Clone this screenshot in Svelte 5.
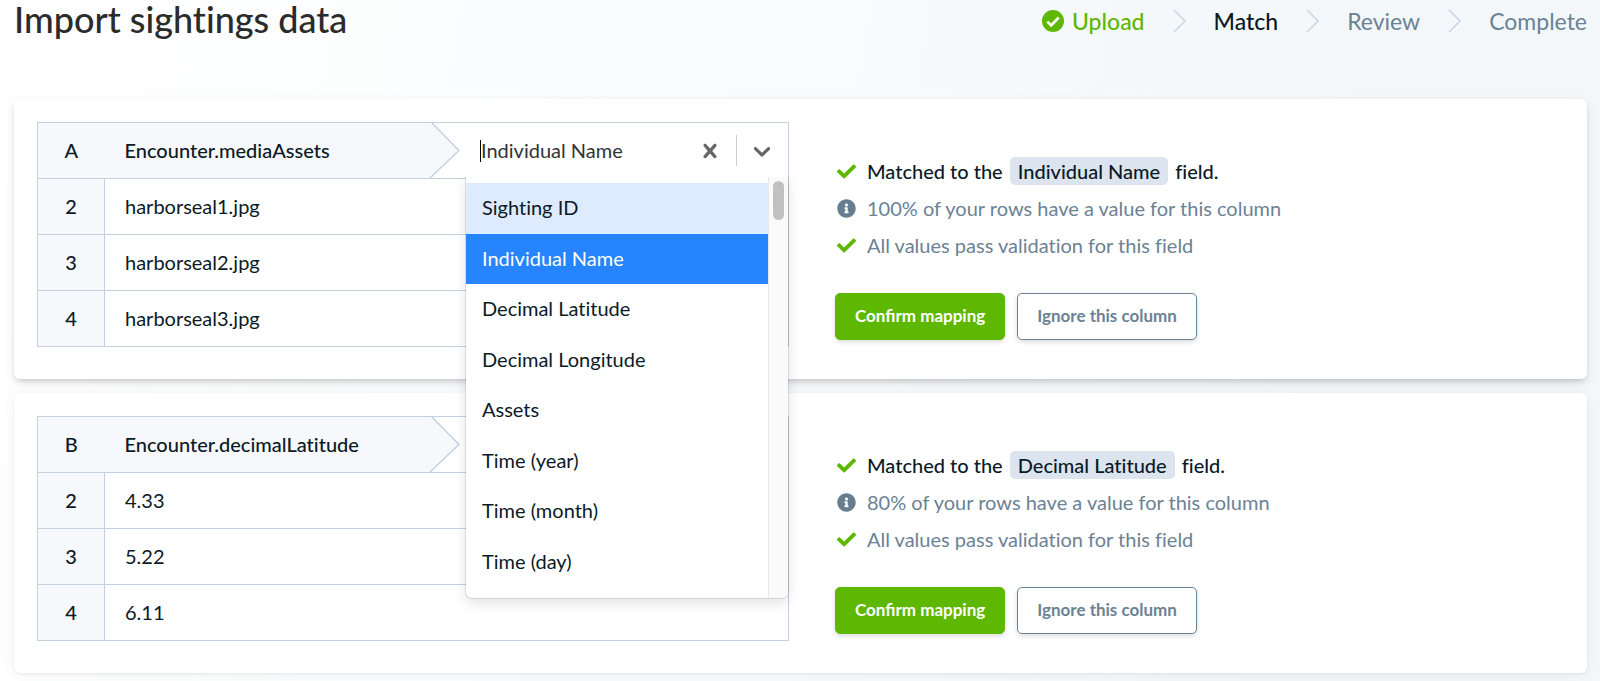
<script>
  const steps = [
    { label: 'Upload', state: 'done' },
    { label: 'Match', state: 'current' },
    { label: 'Review', state: 'todo' },
    { label: 'Complete', state: 'todo' },
  ];

  const columns = [
    {
      letter: 'A',
      name: 'Encounter.mediaAssets',
      values: ['harborseal1.jpg', 'harborseal2.jpg', 'harborseal3.jpg'],
      field: 'Individual Name',
      filled: 100,
      open: true,
    },
    {
      letter: 'B',
      name: 'Encounter.decimalLatitude',
      values: ['4.33', '5.22', '6.11'],
      field: 'Decimal Latitude',
      filled: 80,
      open: false,
    },
  ];

  const options = [
    'Sighting ID',
    'Individual Name',
    'Decimal Latitude',
    'Decimal Longitude',
    'Assets',
    'Time (year)',
    'Time (month)',
    'Time (day)',
  ];
  const focused = 'Sighting ID';
</script>

{#snippet check()}
  <svg class="status-icon" viewBox="0 0 512 512" aria-hidden="true">
    <path fill="#5eb700" d="M173.898 439.404l-166.400-166.400c-9.997-9.997-9.997-26.206 0-36.204l36.203-36.204c9.997-9.998 26.207-9.998 36.204 0L192 312.690 432.095 72.596c9.997-9.997 26.207-9.997 36.204 0l36.203 36.204c9.997 9.997 9.997 26.206 0 36.204l-294.400 294.401c-9.998 9.997-26.207 9.997-36.204-.001z" />
  </svg>
{/snippet}

<main>
  <header>
    <h1>Import sightings data</h1>
    <ol class="steps">
      {#each steps as step, i}
        {#if i > 0}
          <li class="divider" aria-hidden="true">
            <svg width="13" height="24" viewBox="0 0 13 24"><path d="M1 1l11 11L1 23" fill="none" stroke="#ccd7e5" stroke-width="1.6" /></svg>
          </li>
        {/if}
        <li class={step.state}>
          {#if step.state === 'done'}
            <svg width="22" height="22" viewBox="0 0 22 22" aria-hidden="true">
              <circle cx="11" cy="11" r="11" fill="#5eb700" />
              <path d="M5.300 11.600l3.900 3.800 7.500-7.900" fill="none" stroke="#fff" stroke-width="2.700" />
            </svg>
          {/if}
          <span>{step.label}</span>
        </li>
      {/each}
    </ol>
  </header>

  {#each columns as column}
    <section class="card" class:active={column.open}>
      <table>
        <thead>
          <tr>
            <th class="index" scope="col">{column.letter}</th>
            <th class="head" scope="col">
              <div class="mapping">
                <span class="name">{column.name}</span>
                <svg class="arrow" width="32" height="55" viewBox="0 0 32 55" aria-hidden="true">
                  <path d="M0 0H4L31 27.500L2 55H0Z" fill="#f6f8fb" />
                  <path d="M4 0L31 27.500L2 55" fill="none" stroke="#c3d1e1" stroke-width="1.500" />
                </svg>
                <div class="control">
                  {#if column.open}
                    <span class="caret"></span>
                    <input type="text" role="combobox" aria-label="Field" aria-expanded="true" aria-controls="fields" value={column.field} />
                    <button class="icon" type="button" aria-label="Clear">
                      <svg width="28" height="28" viewBox="0 0 20 20"><path d="M14.348 14.849c-0.469 0.469-1.229 0.469-1.697 0l-2.651-3.030-2.651 3.029c-0.469 0.469-1.229 0.469-1.697 0-0.469-0.469-0.469-1.229 0-1.697l2.758-3.150-2.759-3.152c-0.469-0.469-0.469-1.228 0-1.697s1.228-0.469 1.697 0l2.652 3.031 2.651-3.031c0.469-0.469 1.228-0.469 1.697 0s0.469 1.229 0 1.697l-2.758 3.152 2.758 3.150c0.469 0.469 0.469 1.229 0 1.698z" /></svg>
                    </button>
                    <span class="separator"></span>
                    <button class="icon" type="button" aria-label="Open">
                      <svg width="28" height="28" viewBox="0 0 20 20"><path d="M4.516 7.548c0.436-0.446 1.043-0.481 1.576 0l3.908 3.747 3.908-3.747c0.533-0.481 1.141-0.446 1.574 0 0.436 0.445 0.408 1.197 0 1.615-0.406 0.418-4.695 4.502-4.695 4.502-0.217 0.223-0.502 0.335-0.787 0.335s-0.570-0.112-0.789-0.335c0 0-4.287-4.084-4.695-4.502s-0.436-1.170 0-1.615z" /></svg>
                    </button>
                    <div class="menu">
                      <ul id="fields" role="listbox" aria-label="Fields">
                        {#each options as option}
                          <li role="option" aria-selected={option === column.field} class:focused={option === focused}>{option}</li>
                        {/each}
                      </ul>
                      <div class="track"><div class="thumb"></div></div>
                    </div>
                  {/if}
                </div>
              </div>
            </th>
          </tr>
        </thead>
        <tbody>
          {#each column.values as value, i}
            <tr>
              <th class="index" scope="row">{i + 2}</th>
              <td>{value}</td>
            </tr>
          {/each}
        </tbody>
      </table>

      <div class="details">
        <ul class="status">
          <li class="matched">
            {@render check()}
            <span>Matched to the <span class="badge">{column.field}</span> field.</span>
          </li>
          <li>
            <svg class="status-icon" viewBox="0 0 512 512" aria-hidden="true">
              <path fill="#667e90" d="M256 8C119 8 8 119 8 256s111 248 248 248 248-111 248-248S393 8 256 8zm0 110c23.200 0 42 18.800 42 42s-18.800 42-42 42-42-18.800-42-42 18.800-42 42-42zm56 254c0 6.600-5.400 12-12 12h-88c-6.600 0-12-5.400-12-12v-24c0-6.600 5.400-12 12-12h12v-64h-12c-6.600 0-12-5.400-12-12v-24c0-6.600 5.400-12 12-12h64c6.600 0 12 5.400 12 12v100h12c6.600 0 12 5.400 12 12v24z" />
            </svg>
            <span>{column.filled}% of your rows have a value for this column</span>
          </li>
          <li>
            {@render check()}
            <span>All values pass validation for this field</span>
          </li>
        </ul>
        <div class="actions">
          <button class="primary" type="button">Confirm mapping</button>
          <button class="secondary" type="button">Ignore this column</button>
        </div>
      </div>
    </section>
  {/each}
</main>

<style>
  :global(body) {
    margin: 0;
    background: linear-gradient(100deg, #ffffff 0%, #fbfcfd 35%, #f3f7fa 80%, #f3f7fa 100%) no-repeat;
    min-height: 100vh;
  }
  main {
    font-family: Lato, 'Open Sans', sans-serif;
    font-size: 20px;
    line-height: 24px;
    font-variant-ligatures: none;
    color: #0b1a26;
    padding: 0 13px 8px 14px;
  }
  header {
    display: flex;
    justify-content: space-between;
    align-items: flex-start;
    height: 99px;
  }
  h1 {
    margin: 0;
    font-size: 36px;
    line-height: 38px;
    font-weight: 500;
    color: #2b2b2b;
  }
  ul, ol {
    list-style: none;
    margin: 0;
    padding: 0;
  }
  .steps {
    display: flex;
    align-items: center;
    gap: 28px;
    font-size: 23px;
    line-height: 28px;
    padding-top: 7px;
    color: #6b8294;
  }
  .steps li {
    display: flex;
    align-items: center;
    gap: 8px;
  }
  .steps .done {
    color: #5eb700;
    font-weight: 500;
  }
  .steps .current {
    color: #0b1a26;
    font-weight: 500;
  }
  .card {
    display: flex;
    align-items: flex-start;
    gap: 46px;
    padding: 23px 23px 32px;
    margin-bottom: 14px;
    border-radius: 6px;
    background: #fff;
    position: relative;
    box-shadow: 0 1px 3px rgba(0, 0, 0, 0.06), 0 2px 14px rgba(0, 0, 0, 0.05);
  }
  .card:last-child {
    margin-bottom: 0;
  }
  .card.active {
    z-index: 1;
    box-shadow: 0 4px 6px -3px rgba(0, 0, 0, 0.2), 0 5px 12px rgba(0, 0, 0, 0.06), 0 1px 10px rgba(0, 0, 0, 0.04);
  }
  table {
    flex: 0 1 752px;
    border-collapse: collapse;
    table-layout: fixed;
    width: 752px;
    border: 1px solid #c3d1e1;
  }
  tr {
    height: 56px;
  }
  th, td {
    box-sizing: border-box;
    border: 1px solid #c3d1e1;
    padding: 0 0 2px;
    text-align: left;
    font-weight: 400;
  }
  td {
    padding-left: 20px;
  }
  .index {
    width: 67px;
    text-align: center;
    font-weight: 500;
    background: #f6f8fb;
  }
  thead .index {
    border-right: 0;
  }
  .head {
    border-left: 0;
    padding: 0;
  }
  .mapping {
    display: flex;
    align-items: center;
    height: 55px;
  }
  .name {
    flex: 1;
    font-weight: 500;
    background: #f6f8fb;
    line-height: 55px;
    padding-left: 20px;
  }
  .arrow {
    flex: none;
  }
  .control {
    position: relative;
    display: flex;
    align-items: center;
    flex: 0 1 322px;
    min-width: 0;
    height: 55px;
    margin-left: 6px;
  }
  .caret {
    width: 1px;
    height: 22px;
    margin-left: 14px;
    background: #000;
  }
  input {
    flex: 1;
    min-width: 0;
    border: 0;
    outline: 0;
    padding: 0 0 2px;
    background: none;
    font: inherit;
    color: #333;
  }
  .icon {
    border: 0;
    background: none;
    padding: 0 12px 0 11px;
    display: flex;
    fill: #666;
  }
  .separator {
    width: 1px;
    height: 31px;
    background: #ccc;
  }
  .menu {
    position: absolute;
    left: 0;
    right: 0;
    top: 54px;
    display: flex;
    height: 421px;
    background: #fff;
    border-radius: 0 0 6px 6px;
    overflow: hidden;
    box-shadow: 0 0 0 1px rgba(0, 0, 0, 0.1), 0 5px 14px rgba(0, 0, 0, 0.12);
    clip-path: inset(0 -30px -30px -30px);
  }
  .menu ul {
    flex: 1;
    height: 404px;
    padding-top: 6px;
    display: grid;
    grid-auto-rows: 1fr;
  }
  .menu li {
    display: flex;
    align-items: center;
    padding: 0 16px 2px;
  }
  .menu li.focused {
    background: #deebff;
  }
  .menu li[aria-selected='true'] {
    background: #2684ff;
    color: #fff;
  }
  .track {
    width: 15px;
    padding: 4px 0 0 4px;
    border-left: 1px solid #e8e8e8;
    background: #fafafa;
  }
  .thumb {
    width: 11px;
    height: 39px;
    border-radius: 6px;
    background: #c1c1c1;
  }
  .details {
    padding-top: 31px;
  }
  .status li {
    display: flex;
    align-items: center;
    gap: 11px;
    min-height: 36px;
    margin-bottom: 1px;
    padding-left: 2px;
    color: #6b8294;
  }
  .status .matched {
    color: #0b1a26;
    font-weight: 500;
  }
  .status-icon {
    width: 19px;
    height: 19px;
    flex: none;
  }
  .badge {
    display: inline-block;
    line-height: 28px;
    padding: 0 8px;
    margin: 0 2px;
    border-radius: 5px;
    background: #dce5ef;
  }
  .actions {
    display: flex;
    gap: 12px;
    margin-top: 30px;
  }
  .actions button {
    height: 47px;
    padding: 0 19px 2px;
    border-radius: 5px;
    font: 700 17px/20px Lato, 'Open Sans', sans-serif;
    box-shadow: 0 2px 5px rgba(0, 0, 0, 0.14);
  }
  .primary {
    border: 1px solid #5eb700;
    background: #5eb700;
    color: #fff;
  }
  .secondary {
    border: 1px solid #6b8294;
    background: #fff;
    color: #6b8294;
  }
</style>
